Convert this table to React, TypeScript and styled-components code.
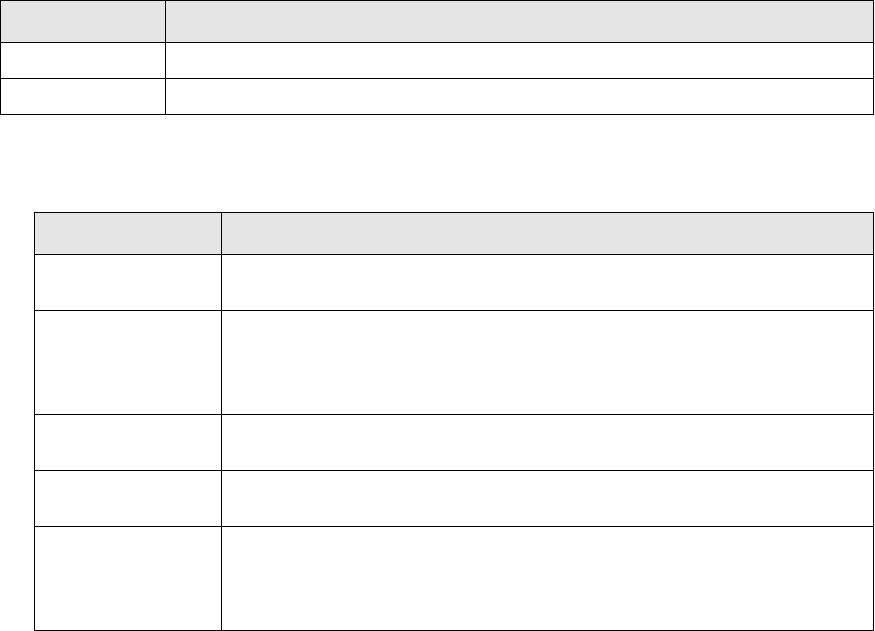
import styled, { createGlobalStyle } from "styled-components";

const GlobalStyle = createGlobalStyle`
  html, body {
    margin: 0;
    padding: 0;
    background: #ffffff;
    font-family: "Liberation Sans", Arial, sans-serif;
    font-size: 14px;
    color: #000;
  }
`;

const Page = styled.div`
  display: flex;
  flex-direction: column;
  width: 875px;
`;

const Table = styled.table<{ $indent?: number; $top?: number }>`
  border-collapse: collapse;
  table-layout: fixed;
  width: ${(p) => 874 - (p.$indent ?? 0)}px;
  margin-left: ${(p) => p.$indent ?? 0}px;
  margin-top: ${(p) => p.$top ?? 0}px;
`;

const HeadCell = styled.th<{ $w?: number }>`
  border: 1px solid #000;
  background: #e5e5e5;
  height: 41px;
  padding: 0 8px;
  text-align: left;
  font-weight: bold;
  ${(p) => (p.$w ? `width: ${p.$w}px;` : "")}
`;

const Cell = styled.td<{ $h: number }>`
  border: 1px solid #000;
  height: ${(p) => p.$h}px;
  padding: 0 8px;
  vertical-align: top;
`;

const firstRows = [35, 35];
const secondRows = [55, 103, 55, 55, 103];

export default function App() {
  return (
    <>
      <GlobalStyle />
      <Page>
        <Table>
          <thead>
            <tr>
              <HeadCell $w={148} />
              <HeadCell />
            </tr>
          </thead>
          <tbody>
            {firstRows.map((h, i) => (
              <tr key={i}>
                <Cell $h={h} />
                <Cell $h={h} />
              </tr>
            ))}
          </tbody>
        </Table>
        <Table $indent={34} $top={97}>
          <thead>
            <tr>
              <HeadCell $w={170} />
              <HeadCell />
            </tr>
          </thead>
          <tbody>
            {secondRows.map((h, i) => (
              <tr key={i}>
                <Cell $h={h} />
                <Cell $h={h} />
              </tr>
            ))}
          </tbody>
        </Table>
      </Page>
    </>
  );
}
